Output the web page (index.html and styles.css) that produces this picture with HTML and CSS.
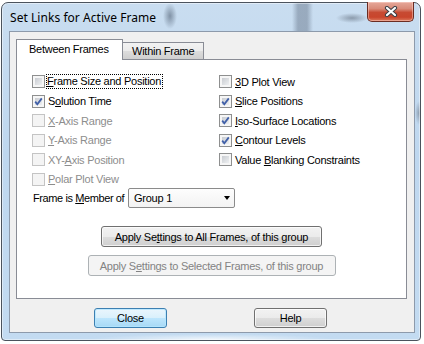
FILE: index.html
```html
<!DOCTYPE html>
<html lang="en">
<head>
<meta charset="utf-8" />
<title>Set Links for Active Frame</title>
<link rel="stylesheet" href="styles.css">
</head>
<body>
<div class="window">
	<div class="titlebar">
		<span class="title">Set Links for Active Frame</span>
		<span class="close-btn">
			<svg width="14" height="11" viewBox="0 0 14 11">
				<path d="M3 2 L11 9 M11 2 L3 9" stroke="#3b3f45" stroke-width="4.2" stroke-linecap="round"/>
				<path d="M3 2 L11 9 M11 2 L3 9" stroke="#fff" stroke-width="2.2" stroke-linecap="round"/>
			</svg>
		</span>
	</div>
	<div class="client">
		<div class="tabs">
			<div class="tab active">Between Frames</div>
			<div class="tab">Within Frame</div>
		</div>
		<div class="panel">
			<div class="checks">
				<div class="col">
					<label class="row"><span class="box"></span><span class="focus"><u>F</u>rame Size and Position</span></label>
					<label class="row"><span class="box checked"></span><span>S<u>o</u>lution Time</span></label>
					<label class="row off"><span class="box"></span><span><u>X</u>-Axis Range</span></label>
					<label class="row off"><span class="box"></span><span><u>Y</u>-Axis Range</span></label>
					<label class="row off"><span class="box"></span><span>XY-<u>A</u>xis Position</span></label>
					<label class="row off"><span class="box"></span><span><u>P</u>olar Plot View</span></label>
				</div>
				<div class="col">
					<label class="row"><span class="box"></span><span><u>3</u>D Plot View</span></label>
					<label class="row"><span class="box checked"></span><span><u>S</u>lice Positions</span></label>
					<label class="row"><span class="box checked"></span><span><u>I</u>so-Surface Locations</span></label>
					<label class="row"><span class="box checked"></span><span><u>C</u>ontour Levels</span></label>
					<label class="row"><span class="box"></span><span>Value <u>B</u>lanking Constraints</span></label>
				</div>
			</div>
			<div class="member">
				<span class="member-label">Frame is <u>M</u>ember of</span>
				<span class="select">Group 1<span class="arrow"></span></span>
			</div>
			<div class="actions">
				<span class="btn wide">Apply Se<u>t</u>tings to All Frames, of this group</span>
				<span class="btn wider disabled">Apply S<u>e</u>ttings to Selected Frames, of this group</span>
			</div>
		</div>
		<div class="footer">
			<span class="btn small default">Close</span>
			<span class="btn small">Help</span>
		</div>
	</div>
</div>
</body>
</html>
```

FILE: styles.css
```css
*{box-sizing:border-box;}
html, body{margin:0; padding:0; background:#fff;}
body{font:11px "Liberation Sans", Arial, sans-serif; letter-spacing:-0.25px; color:#000;}
u{text-decoration:underline; text-underline-offset:1px;}

.window{margin:2px 0 0 1px; width:420px; height:339px; border:1px solid #4b535d; border-radius:7px 7px 4px 4px; padding:0 5px 7px 7px;
	background:
		radial-gradient(ellipse 7px 13px at 168px 13px, rgba(70,85,105,.55), transparent),
		linear-gradient(90deg, transparent 290px, rgba(95,110,130,.45) 296px, rgba(95,110,130,.45) 305px, transparent 311px) 0 0/100% 28px no-repeat,
		radial-gradient(ellipse 16px 5px at 350px 15px, rgba(80,90,105,.5), transparent),
		radial-gradient(ellipse 4px 12px at 417px 110px, rgba(90,100,115,.5), transparent),
		radial-gradient(ellipse 120px 5px at 210px 336px, rgba(255,255,255,.7), transparent),
		linear-gradient(180deg, #c9ddf0, #bed7ef 45%, #c3dbf1);
	box-shadow:inset 0 0 0 1px rgba(255,255,255,.45);}

.titlebar{height:28px; display:flex; justify-content:space-between; align-items:flex-start;}
.title{font:12px "Noto Sans", "Open Sans", sans-serif; letter-spacing:0.05px; padding:6px 0 0 1px; color:#000;}
.close-btn{margin:-1px 1px 0 0; width:47px; height:20px; border:1px solid #6b2c22; border-top:none; border-radius:0 0 5px 5px; display:flex; align-items:center; justify-content:center;
	background:linear-gradient(180deg, #e6a89a 0%, #d98b79 35%, #c74a32 55%, #c9452c 80%, #dc7a5e 100%);
	box-shadow:inset 0 0 0 1px rgba(255,220,210,.45);}

.client{height:302px; border:1px solid #8d9aab; background:#f0f0f0; padding:7px 0 0 6px;}

.tabs{display:flex; align-items:flex-end; height:20px;}
.tab{height:17px; padding:0 9px; border:1px solid #898c95; border-bottom:none; display:flex; align-items:center; margin-left:-1px;
	background:linear-gradient(180deg, #f2f2f2 0%, #ebebeb 50%, #dddddd 50%, #cfcfcf 100%);}
.tab.active{height:21px; margin:0 0 -1px 0; padding:0 0 2px 12px; width:107px; background:#fff; position:relative; z-index:1;}

.panel{width:391px; height:240px; border:1px solid #898c95; background:#fff; padding:12px 0 0 15px;}

.checks{display:flex;}
.col{width:192px; display:flex; flex-direction:column;}
.row{height:19.5px; display:flex; align-items:center; gap:3px; white-space:nowrap;}
.box{width:13px; height:13px; border:1px solid #8e8f8f; padding:2px; flex:none;
	background:linear-gradient(135deg, #c9ccd1, #eef0f2) content-box, #f6f6f6;}
.box.checked{background:
	url("data:image/svg+xml,%3Csvg xmlns='http://www.w3.org/2000/svg' width='11' height='11'%3E%3Cpath d='M2.2 5.6 L4.3 8.2 L8.8 2.4' fill='none' stroke='%234160a8' stroke-width='1.8'/%3E%3C/svg%3E") center/11px 11px no-repeat,
	linear-gradient(135deg, #c9ccd1, #eef0f2) content-box, #f6f6f6;}
.row.off{color:#8d8d8d;}
.row.off .box{border-color:#c4c4c4; background:#f4f4f4;}
.focus{outline:1px dotted #000; outline-offset:0; padding:0 1px 1px 0; margin-left:-1px;}

.member{display:flex; align-items:center; margin:-1px 0 0 1px; height:20px; white-space:nowrap;}
.member-label{width:95px; flex:none; letter-spacing:-0.4px;}
.select{width:107px; height:20px; border:1px solid #8b8b8b; border-radius:2px; background:linear-gradient(180deg, #fdfdfd, #f3f3f3); display:flex; align-items:center; justify-content:space-between; padding:0 4px 0 5px;}
.arrow{width:0; height:0; border-left:3.5px solid transparent; border-right:3.5px solid transparent; border-top:4px solid #000;}

.actions{display:flex; flex-direction:column; align-items:center; gap:8px; margin:18px 0 0 -15px;}
.btn{height:21px; border:1px solid #707070; border-radius:3px; display:flex; align-items:center; justify-content:center; white-space:nowrap;
	background:linear-gradient(180deg, #f2f2f2 0%, #ebebeb 50%, #dddddd 50%, #cfcfcf 100%);
	box-shadow:inset 0 0 0 1px rgba(255,255,255,.7);}
.btn.wide{width:221px;}
.btn.wider{width:248px;}
.btn.disabled{border-color:#adb2b5; background:#f4f4f4; color:#838383; box-shadow:none;}

.footer{display:flex; gap:87px; padding:9px 0 0 78px;}
.btn.small{width:73px; height:20px;}
.btn.default{border-color:#3c7fb1; background:linear-gradient(180deg, #eaf6fd 0%, #d9f0fc 50%, #bee6fd 50%, #a7d9f5 100%); box-shadow:inset 0 0 0 1px rgba(180,230,255,.8);}
```
